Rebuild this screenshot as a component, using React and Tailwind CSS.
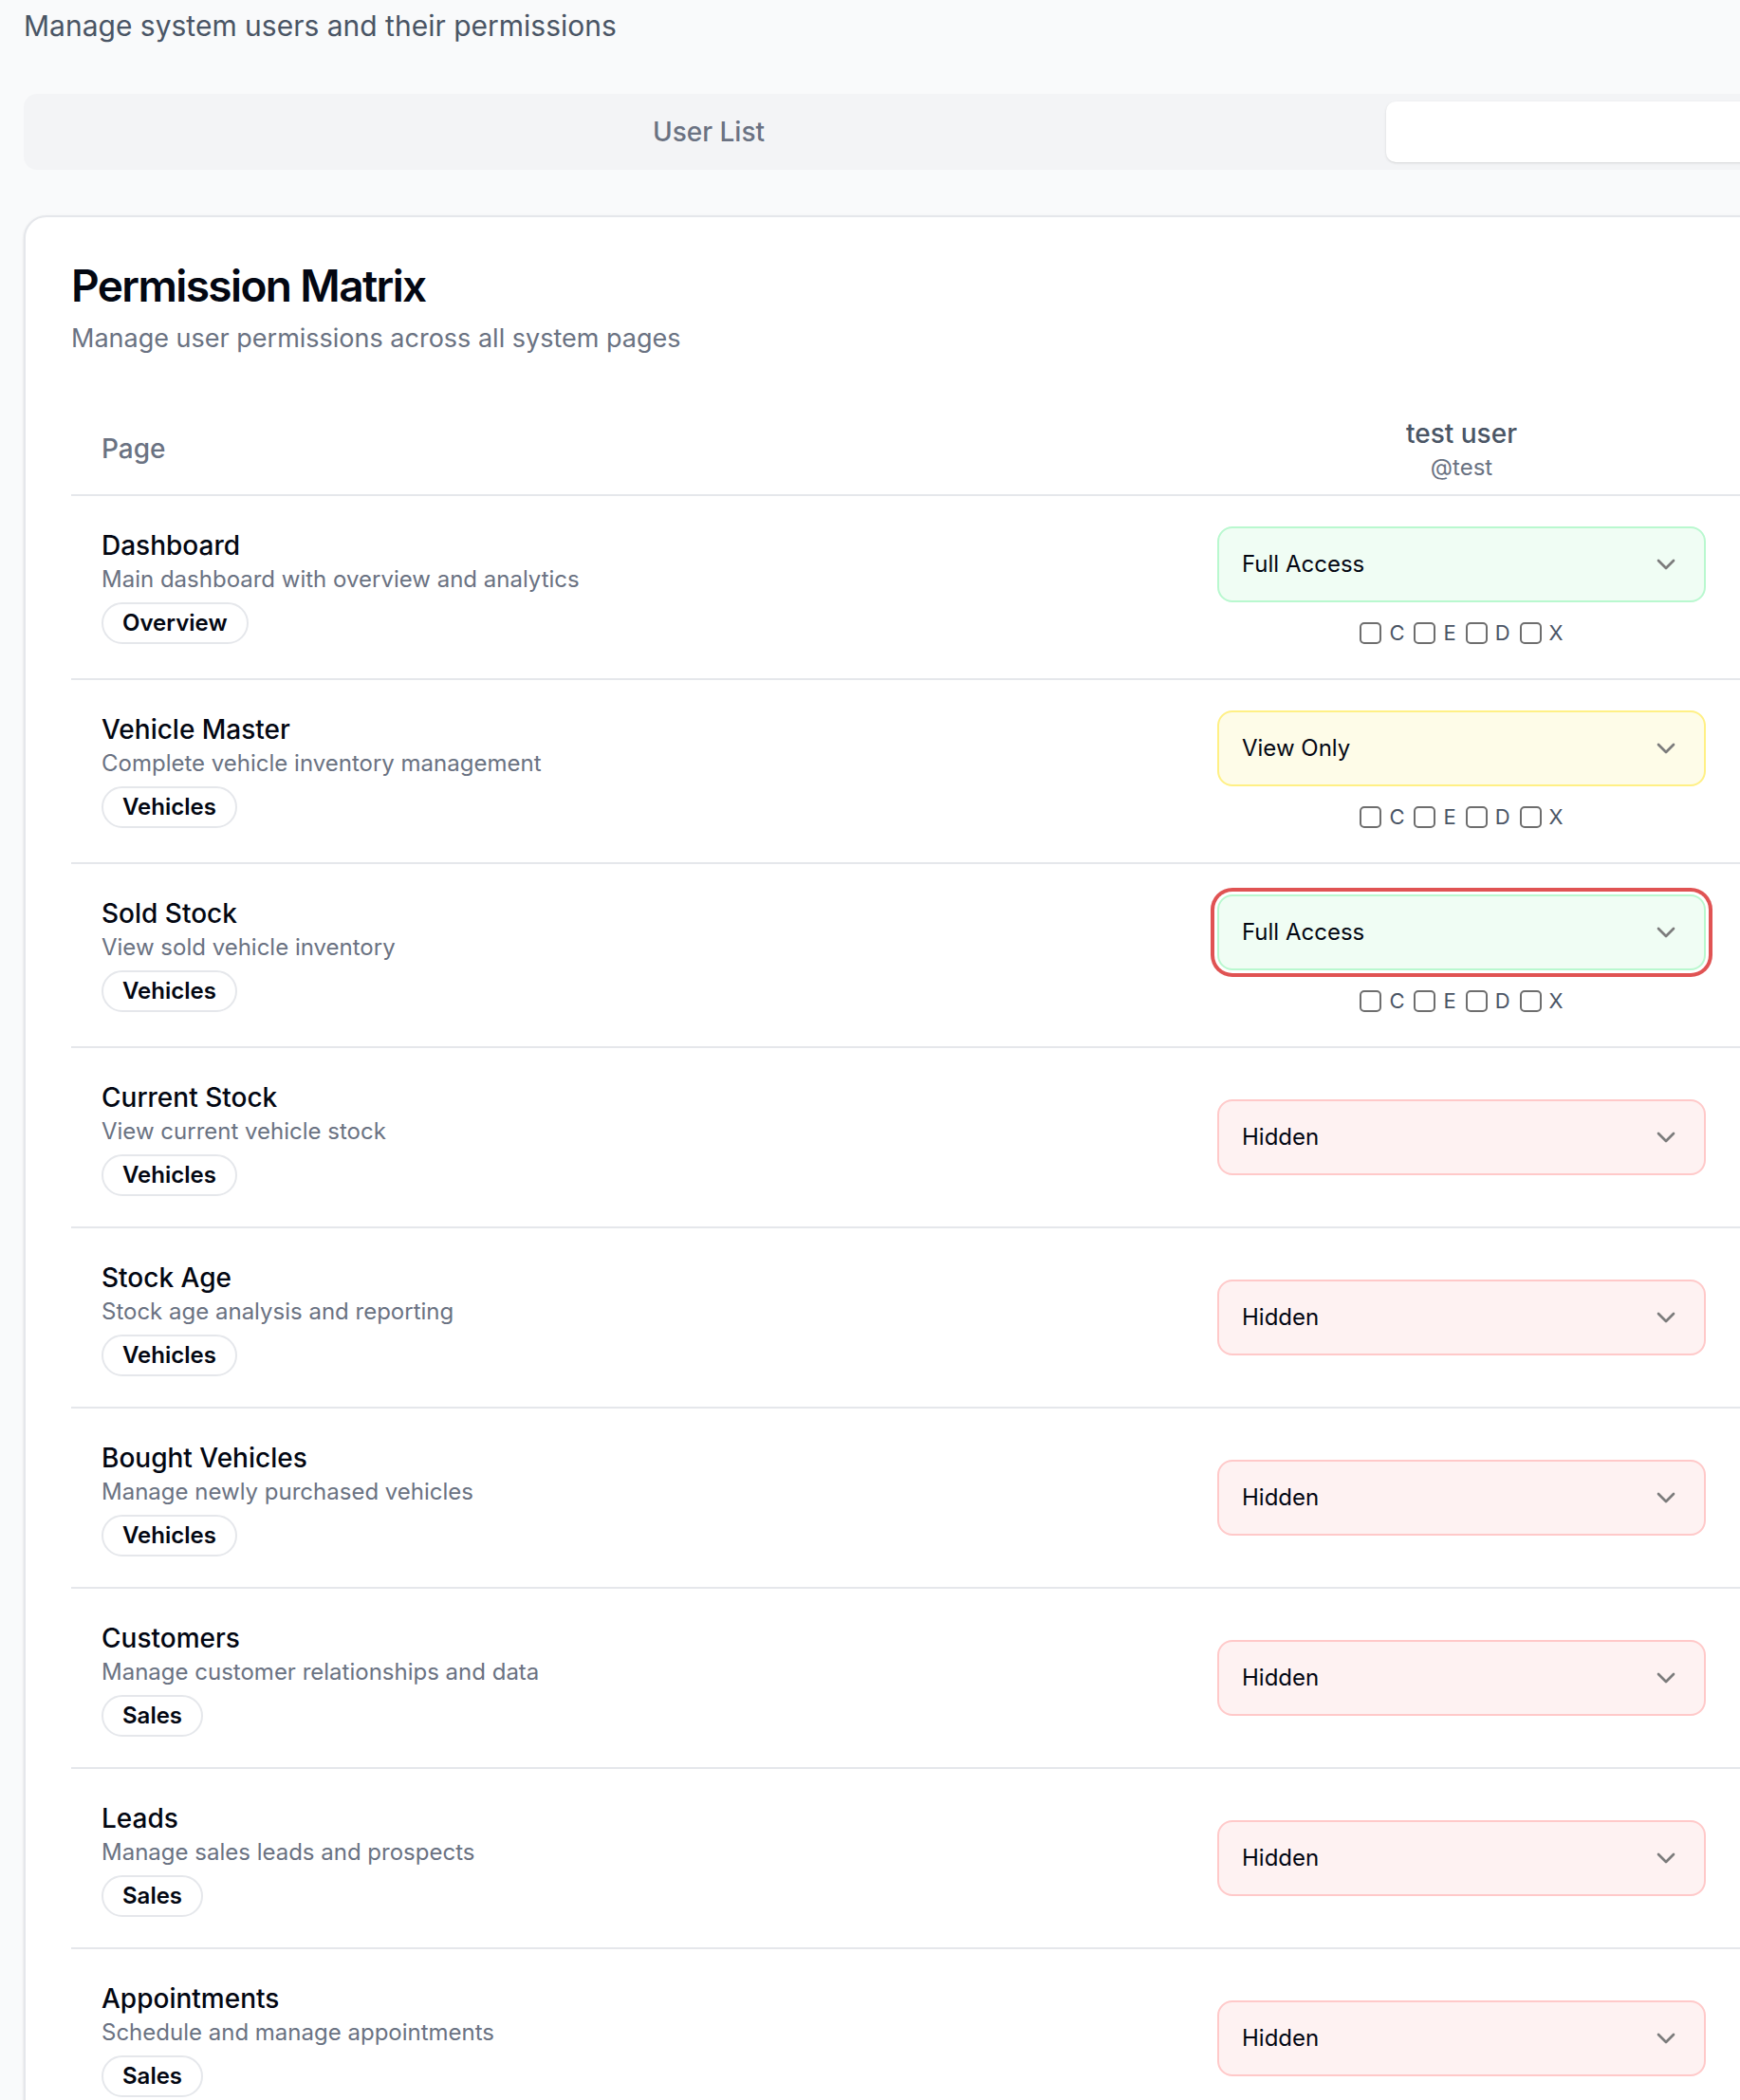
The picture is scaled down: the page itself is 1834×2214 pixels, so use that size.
import { ChevronDown } from 'lucide-react';

const pages = [
  { name: 'Dashboard', desc: 'Main dashboard with overview and analytics', tag: 'Overview', level: 'full', flags: true },
  { name: 'Vehicle Master', desc: 'Complete vehicle inventory management', tag: 'Vehicles', level: 'view', flags: true },
  { name: 'Sold Stock', desc: 'View sold vehicle inventory', tag: 'Vehicles', level: 'full', flags: true, focused: true },
  { name: 'Current Stock', desc: 'View current vehicle stock', tag: 'Vehicles', level: 'hidden' },
  { name: 'Stock Age', desc: 'Stock age analysis and reporting', tag: 'Vehicles', level: 'hidden' },
  { name: 'Bought Vehicles', desc: 'Manage newly purchased vehicles', tag: 'Vehicles', level: 'hidden' },
  { name: 'Customers', desc: 'Manage customer relationships and data', tag: 'Sales', level: 'hidden' },
  { name: 'Leads', desc: 'Manage sales leads and prospects', tag: 'Sales', level: 'hidden' },
  { name: 'Appointments', desc: 'Schedule and manage appointments', tag: 'Sales', level: 'hidden' },
];

const levelStyles = {
  full: { label: 'Full Access', cls: 'bg-green-50 border-green-200' },
  view: { label: 'View Only', cls: 'bg-yellow-50 border-yellow-200' },
  hidden: { label: 'Hidden', cls: 'bg-red-50 border-red-200' },
};

function PermissionSelect({ level, focused }) {
  const style = levelStyles[level];
  return (
    <div
      className={`h-20 w-full flex items-center justify-between rounded-2xl border-2 px-6 ${style.cls} ${
        focused ? 'ring-4 ring-[#e05353] ring-offset-[3px] ring-offset-white' : ''
      }`}
    >
      <span className="text-[24px] leading-[32px] text-gray-950">{style.label}</span>
      <ChevronDown size={32} strokeWidth={2} className="text-[#7c7c7c]" />
    </div>
  );
}

function Flags() {
  return (
    <div className="mt-4 h-8 flex items-center justify-center gap-[10px]">
      {['C', 'E', 'D', 'X'].map((f) => (
        <label key={f} className="flex items-center gap-2">
          <span className="w-[23px] h-[23px] rounded-[5px] border-2 border-[#6e6e6e] bg-white" />
          <span className="text-[22px] leading-[32px] text-gray-600">{f}</span>
        </label>
      ))}
    </div>
  );
}

export default function App() {
  return (
    <div className="w-[1834px] h-[2214px] overflow-hidden bg-gray-50 font-['Inter',sans-serif]">
      <div className="w-[2920px] pl-[25px] pt-[3px]">
        {/* page subtitle */}
        <p className="text-[30px] leading-[48px] text-gray-600">Manage system users and their permissions</p>

        {/* tabs */}
        <div className="mt-12 w-[2872px] h-20 grid grid-cols-2 rounded-[14px] bg-gray-100 p-2">
          <button className="rounded-[10px] text-[28px] font-medium text-gray-500">User List</button>
          <div className="rounded-[10px] bg-white shadow-sm" />
        </div>

        {/* card */}
        <div className="mt-12 w-[2872px] rounded-3xl border-2 border-gray-200 bg-white shadow-sm">
          <div className="p-12">
            <h2 className="text-[46px] leading-[48px] font-semibold tracking-[-0.035em] text-gray-950">Permission Matrix</h2>
            <p className="mt-3 text-[27px] leading-[40px] text-gray-500">Manage user permissions across all system pages</p>
          </div>

          <div className="px-12 pb-12">
            {/* header */}
            <div className="flex h-[98px] border-b-2 border-gray-200">
              <div className="w-[1176px] px-8 flex items-center text-[28px] font-medium text-gray-500">Page</div>
              <div className="w-[579px] px-8 flex flex-col items-center justify-center">
                <span className="text-[28px] leading-[40px] font-medium text-gray-600">test user</span>
                <span className="text-[24px] leading-[32px] text-gray-500">@test</span>
              </div>
              <div className="flex-1" />
            </div>

            {/* rows */}
            {pages.map((p) => (
              <div key={p.name} className="flex border-b-2 border-gray-200">
                <div className="w-[1176px] px-8 py-8">
                  <div className="text-[28px] leading-[40px] font-medium text-gray-950">{p.name}</div>
                  <div className="text-[24px] leading-[32px] text-gray-500">{p.desc}</div>
                  <span className="mt-2 inline-flex rounded-full border-2 border-gray-200 px-5 py-1 text-[24px] leading-[32px] font-semibold text-gray-950">
                    {p.tag}
                  </span>
                </div>
                <div className="w-[579px] px-8 py-8 flex flex-col justify-center">
                  <PermissionSelect level={p.level} focused={p.focused} />
                  {p.flags && <Flags />}
                </div>
                <div className="flex-1" />
              </div>
            ))}
          </div>
        </div>
      </div>
    </div>
  );
}
